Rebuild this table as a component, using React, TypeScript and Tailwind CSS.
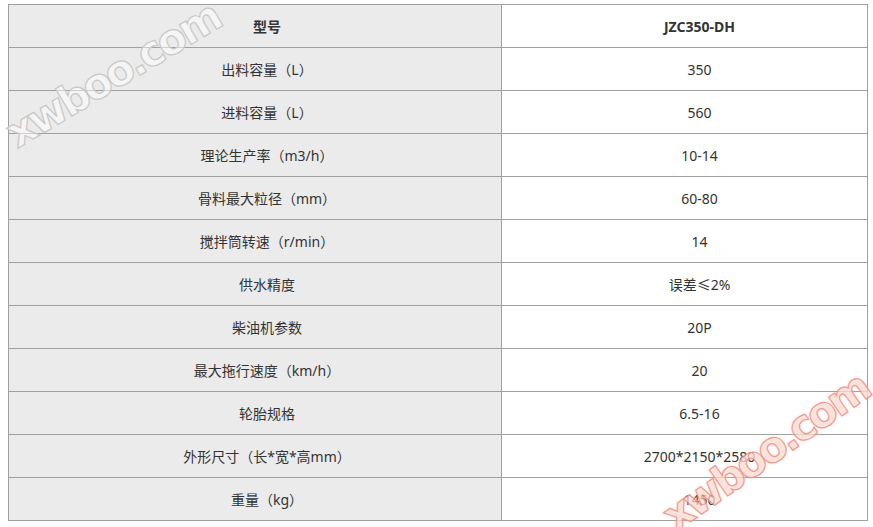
import React from "react";

const rows: [string, string][] = [
  ["出料容量（L）", "350"],
  ["进料容量（L）", "560"],
  ["理论生产率（m3/h）", "10-14"],
  ["骨料最大粒径（mm）", "60-80"],
  ["搅拌筒转速（r/min）", "14"],
  ["供水精度", "误差≤2%"],
  ["柴油机参数", "20P"],
  ["最大拖行速度（km/h）", "20"],
  ["轮胎规格", "6.5-16"],
  ["外形尺寸（长*宽*高mm）", "2700*2150*2580"],
  ["重量（kg）", "1450"],
];

export default function App() {
  return (
    <div
      className="relative w-[873px] h-[527px] bg-white overflow-hidden text-[14px] text-[#333]"
      style={{ fontFamily: '"Noto Sans", "Noto Sans CJK SC", sans-serif' }}
    >
      <div className="pl-[8px] pt-[4px]">
        <table className="border-collapse w-[859px] table-fixed">
          <colgroup>
            <col className="w-[493px]" />
            <col className="w-[366px]" />
          </colgroup>
          <tbody>
            <tr className="h-[43px]">
              <td className="border border-[#a0a0a0] bg-[#ebebeb] text-center font-bold pl-[24px] p-0">型号</td>
              <td className="border border-[#a0a0a0] bg-white text-center font-bold pl-[30px] p-0">JZC350-DH</td>
            </tr>
            {rows.map(([k, v]) => (
              <tr key={k} className="h-[43px]">
                <td className="border border-[#a0a0a0] bg-[#ebebeb] text-center pl-[24px] p-0">{k}</td>
                <td className="border border-[#a0a0a0] bg-white text-center pl-[30px] p-0">{v}</td>
              </tr>
            ))}
          </tbody>
        </table>
      </div>

      <div
        className="absolute left-[113px] top-[75px] -translate-x-1/2 -translate-y-1/2 -rotate-[31deg] whitespace-nowrap text-[42px] tracking-[-3px] font-bold leading-none text-white/50 [-webkit-text-stroke:1.2px_#c8c8c8] pointer-events-none"
        style={{ fontFamily: '"DejaVu Sans", sans-serif' }}
      >
        xwboo.com
      </div>
      <div
        className="absolute left-[766px] top-[452px] -translate-x-1/2 -translate-y-1/2 -rotate-[35deg] whitespace-nowrap text-[42px] tracking-[-3px] font-bold leading-none text-white/40 [-webkit-text-stroke:1.2px_#f0907f] [text-shadow:0_0_3px_rgba(249,190,178,0.8)] pointer-events-none opacity-90"
        style={{ fontFamily: '"DejaVu Sans", sans-serif' }}
      >
        xwboo.com
      </div>
    </div>
  );
}
